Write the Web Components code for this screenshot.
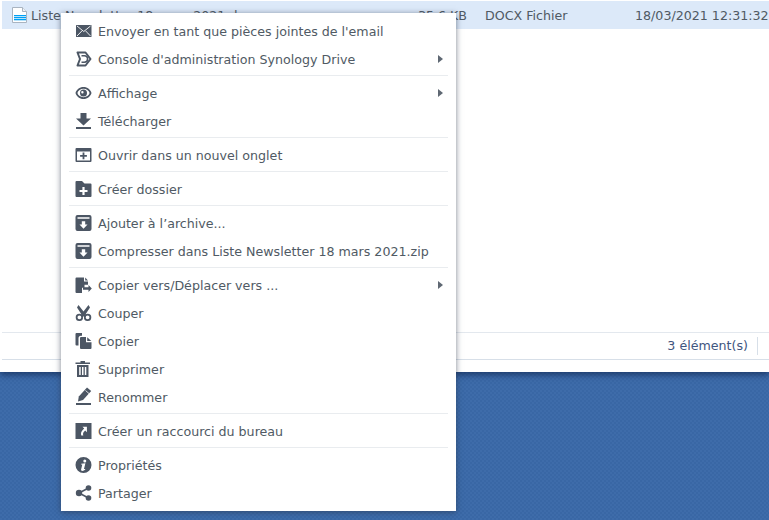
<!DOCTYPE html>
<html>
<head>
<meta charset="utf-8">
<title>Context menu</title>
<style>
  html, body { margin: 0; padding: 0; height: 100%; overflow: hidden; }
  body { font: 12.65px Tahoma, "DejaVu Sans", sans-serif; color: #505a64; }
</style>
</head>
<body>
<file-desktop>
  <file-row slot="window" name="Liste Newsletter 18 mars 2021.docx" size="35.6 KB" type="DOCX Fichier" date="18/03/2021 12:31:32"></file-row>
  <status-bar slot="window">3 élément(s)</status-bar>
  <context-menu slot="menu">
    <menu-item icon="mail">Envoyer en tant que pièces jointes de l'email</menu-item>
    <menu-item icon="drive" arrow>Console d'administration Synology Drive</menu-item>
    <menu-sep></menu-sep>
    <menu-item icon="eye" arrow>Affichage</menu-item>
    <menu-item icon="download">Télécharger</menu-item>
    <menu-sep></menu-sep>
    <menu-item icon="tab">Ouvrir dans un nouvel onglet</menu-item>
    <menu-sep></menu-sep>
    <menu-item icon="folder">Créer dossier</menu-item>
    <menu-sep></menu-sep>
    <menu-item icon="archive">Ajouter à l’archive...</menu-item>
    <menu-item icon="archive">Compresser dans Liste Newsletter 18 mars 2021.zip</menu-item>
    <menu-sep></menu-sep>
    <menu-item icon="move" arrow>Copier vers/Déplacer vers ...</menu-item>
    <menu-item icon="cut">Couper</menu-item>
    <menu-item icon="copy">Copier</menu-item>
    <menu-item icon="trash">Supprimer</menu-item>
    <menu-item icon="rename">Renommer</menu-item>
    <menu-sep></menu-sep>
    <menu-item icon="shortcut">Créer un raccourci du bureau</menu-item>
    <menu-sep></menu-sep>
    <menu-item icon="info">Propriétés</menu-item>
    <menu-item icon="share">Partager</menu-item>
  </context-menu>
</file-desktop>
<script>
const ICONS = {
  mail: '<rect x="1" y="2" width="15.5" height="12" rx=".5"/><path fill="none" stroke="#fff" stroke-width=".9" d="M2 3l6.750 5.500L15.500 3M2 13l5-5.200M15.500 13l-5-5.200"/>',
  drive: '<path fill="none" stroke="currentColor" stroke-width="2" stroke-linejoin="round" d="M2.500 1.500h8L15.500 8l-5 6.500h-8L5 8z"/><path fill="none" stroke="currentColor" stroke-width="1.600" d="M6.500 4.700h2.800a3.300 3.300 0 0 1 0 6.600H6.500"/>',
  eye: '<path fill-rule="evenodd" d="M8.500 2c4 0 7.200 2.700 8 6-.8 3.300-4 6-8 6s-7.200-2.700-8-6c.8-3.300 4-6 8-6zm0 1.800c-3 0-5.400 1.900-6.100 4.200.7 2.300 3.100 4.200 6.100 4.200s5.400-1.900 6.100-4.200c-.7-2.300-3.100-4.200-6.100-4.200zm0 .7a3.500 3.500 0 1 1 0 7 3.500 3.500 0 0 1 0-7zM7.400 6a1.200 1.200 0 1 0 0 2.400 1.200 1.200 0 0 0 0-2.400z"/>',
  download: '<path d="M5.500 0h6v5.500h4.500L8.500 12.500 1 5.500h4.500z"/><rect x="1" y="14" width="15" height="2"/>',
  tab: '<path fill-rule="evenodd" d="M1.500 1h14a1 1 0 0 1 1 1v12a1 1 0 0 1-1 1h-14a1 1 0 0 1-1-1V2a1 1 0 0 1 1-1zM2 4.500v9h13v-9zM7.600 5.500h1.800V8h2.500v1.800H9.400v2.400H7.600V9.800H5.100V8h2.500z"/>',
  folder: '<path fill-rule="evenodd" d="M2 0h5l2.500 2.500H15.500a1 1 0 0 1 1 1V15a1 1 0 0 1-1 1H1.500a1 1 0 0 1-1-1V1a1 1 0 0 1 1-1zM7.400 6v2.900H4.500v2.200h2.900V14h2.200v-2.900h2.900V8.900H9.600V6z"/>',
  archive: '<path fill-rule="evenodd" d="M2.500 0h12a2 2 0 0 1 2 2v12a2 2 0 0 1-2 2h-12a2 2 0 0 1-2-2V2a2 2 0 0 1 2-2zM2.500 2.300v1.500h12V2.300zM6.800 6.200v3.300H4.500l4 4.300 4-4.300h-2.300V6.200z"/>',
  move: '<path d="M1.500.5H9v4h4v3.300H9.500v3H7V16H1.500a1 1 0 0 1-1-1V1.500a1 1 0 0 1 1-1zM10.200.5l2.800 3h-2.800z"/><path d="M8 10.200h5.500V8l3.300 3.400-3.300 3.600v-2.300H8z"/>',
  cut: '<path fill-rule="evenodd" d="M3.500 0l5 6.500L13.500 0l1.500 2.500L10.600 9.300c.6-.4 1.200-.6 2-.6a3.650 3.650 0 1 1-3.600 3.300L8.500 11l-.5 1A3.650 3.650 0 1 1 4.400 8.700c.8 0 1.400.2 2 .6L2 2.500zM4.400 10.400a1.900 1.900 0 1 0 0 3.800 1.900 1.900 0 0 0 0-3.800zm8.200 0a1.900 1.900 0 1 0 0 3.800 1.900 1.900 0 0 0 0-3.800z"/>',
  copy: '<path d="M1.500 0H7v2.700H6A2.500 2.500 0 0 0 3.500 5.200v7.300H1.500a1 1 0 0 1-1-1V1a1 1 0 0 1 1-1z"/><path d="M6 4h5v5.200h5.500V15a1 1 0 0 1-1 1H6a1 1 0 0 1-1-1V5a1 1 0 0 1 1-1zM12.200 4.200l4.100 3.800h-4.100z"/>',
  trash: '<path fill-rule="evenodd" d="M5.500 0h4.500v1.400h5V3H.5V1.400h5zM2 4h11.500v12H2zM4.200 6v8h1.500V6zM7 6v8h1.500V6zM9.800 6v8h1.500V6z"/>',
  rename: '<path d="M12-1.500 16.200 2 8 11 3 12.500 3.800 7.500z"/><path d="M10.500 1.500l3.800 3.300" stroke="#fff" stroke-width=".8" fill="none"/><rect x="1" y="14" width="15" height="2"/>',
  shortcut: '<path fill-rule="evenodd" d="M.5 0h16v16H.5zM7.500 3.800l1.700 1.700-1.700 1.700c-1.400 1.500-1.900 3.300-1.200 5.300h2c-.5-1.500-.3-2.700.7-3.700l1.200-1.200 1.700 1.700V3.800z"/>',
  info: '<path fill-rule="evenodd" d="M8.500 0a8 8 0 1 1 0 16 8 8 0 0 1 0-16zM9.800 2.600a1.500 1.500 0 1 0 0 3 1.500 1.500 0 0 0 0-3zM6.200 6.700 6 7.500h1.300l-1.200 5c-.2 1 .4 1.400 1.300 1.400 1 0 1.900-.4 2.700-1.100l.2-.7H9l1.400-5.900z"/>',
  share: '<circle cx="4" cy="8" r="3.200"/><circle cx="13.500" cy="3" r="2.800"/><circle cx="13.500" cy="13" r="2.800"/><path fill="none" stroke="currentColor" stroke-width="1.600" d="M13.500 3 4 8l9.500 5"/>'
};

class FileDesktop extends HTMLElement {
  connectedCallback() {
    this.attachShadow({ mode: 'open' });
    this.shadowRoot.innerHTML = `
      <style>
        :host {
          display: flex;
          flex-direction: column;
          position: relative;
          width: 769px;
          height: 520px;
          overflow: hidden;
          background-color: #3a69a8;
          background-image: repeating-conic-gradient(rgba(255,255,255,.02) 0 25%, rgba(0,0,0,.02) 0 50%);
          background-size: 4px 4px;
        }
        .window {
          flex: none;
          box-sizing: border-box;
          height: 372px;
          background: #fff;
          padding-top: 1px;
          display: flex;
          flex-direction: column;
          box-shadow: 0 3px 6px rgba(10,30,70,.6);
        }
        ::slotted(context-menu) {
          position: absolute;
          left: 61px;
          top: 13px;
        }
      </style>
      <div class="window"><slot name="window"></slot></div>
      <slot name="menu"></slot>
    `;
  }
}

class FileRow extends HTMLElement {
  connectedCallback() {
    this.attachShadow({ mode: 'open' });
    this.shadowRoot.innerHTML = `
      <style>
        :host {
          display: flex;
          align-items: center;
          height: 28px;
          margin-left: 2px;
          background: #dce9f9;
          white-space: nowrap;
          flex: none;
        }
        svg { margin-left: 10px; flex: none; }
        .name { margin-left: 2px; width: 380px; overflow: hidden; flex: none; }
        .size { width: 56px; text-align: right; flex: none; }
        .type { margin-left: 18px; width: 150px; flex: none; }
      </style>
      <svg width="17" height="16" viewBox="0 0 17 16">
        <path d="M.5.5h10l4 4v11H.5z" fill="#fff" stroke="#a9b4c1"/>
        <path d="M10.500.5v4h4" fill="#eef2f6" stroke="#a9b4c1"/>
        <rect x="2" y="8" width="12" height="1.300" fill="#00a0f5"/>
        <rect x="2" y="10" width="12" height="1.300" fill="#00a0f5"/>
        <rect x="2" y="12" width="12" height="1.300" fill="#00a0f5"/>
      </svg>
      <span class="name">${this.getAttribute('name')}</span>
      <span class="size">${this.getAttribute('size')}</span>
      <span class="type">${this.getAttribute('type')}</span>
      <span>${this.getAttribute('date')}</span>
    `;
  }
}

class StatusBar extends HTMLElement {
  connectedCallback() {
    this.attachShadow({ mode: 'open' });
    this.shadowRoot.innerHTML = `
      <style>
        :host {
          display: flex;
          justify-content: flex-end;
          align-items: center;
          box-sizing: border-box;
          height: 28px;
          margin: auto 0 12px 2px;
          border-top: 1px solid #e3e8ee;
          border-bottom: 1px solid #d7dfe8;
          color: #3f5680;
          flex: none;
        }
        .count { padding-right: 9px; margin-right: 11px; border-right: 1px solid #d7dfe8; line-height: 18px; }
      </style>
      <span class="count"><slot></slot></span>
    `;
  }
}

class ContextMenu extends HTMLElement {
  connectedCallback() {
    this.attachShadow({ mode: 'open' });
    this.shadowRoot.innerHTML = `
      <style>
        :host {
          display: block;
          box-sizing: border-box;
          width: 395px;
          height: 498px;
          padding: 4px 8px;
          background: #fff;
          box-shadow: 0 1px 6px rgba(40,50,70,.6);
        }
      </style>
      <slot></slot>
    `;
  }
}

class MenuItem extends HTMLElement {
  connectedCallback() {
    this.attachShadow({ mode: 'open' });
    const arrow = this.hasAttribute('arrow') ? '<span class="arrow"></span>' : '';
    this.shadowRoot.innerHTML = `
      <style>
        :host {
          display: flex;
          align-items: center;
          height: 28px;
          color: #505a64;
          white-space: nowrap;
        }
        svg { margin-left: 6px; flex: none; fill: currentColor; color: #4c5664; overflow: visible; }
        .label { margin-left: 6px; flex: 1; }
        .arrow {
          width: 0; height: 0;
          margin-right: 5px;
          border-left: 5px solid #5f6873;
          border-top: 4px solid transparent;
          border-bottom: 4px solid transparent;
        }
      </style>
      <svg width="17" height="16" viewBox="0 0 17 16">${ICONS[this.getAttribute('icon')]}</svg>
      <span class="label"><slot></slot></span>
      ${arrow}
    `;
  }
}

class MenuSep extends HTMLElement {
  connectedCallback() {
    this.attachShadow({ mode: 'open' });
    this.shadowRoot.innerHTML = `
      <style>
        :host { display: block; height: 1px; margin: 2px 0 3px; background: #e9ecef; }
      </style>
    `;
  }
}

customElements.define('file-desktop', FileDesktop);
customElements.define('file-row', FileRow);
customElements.define('status-bar', StatusBar);
customElements.define('context-menu', ContextMenu);
customElements.define('menu-item', MenuItem);
customElements.define('menu-sep', MenuSep);
</script>
</body>
</html>
